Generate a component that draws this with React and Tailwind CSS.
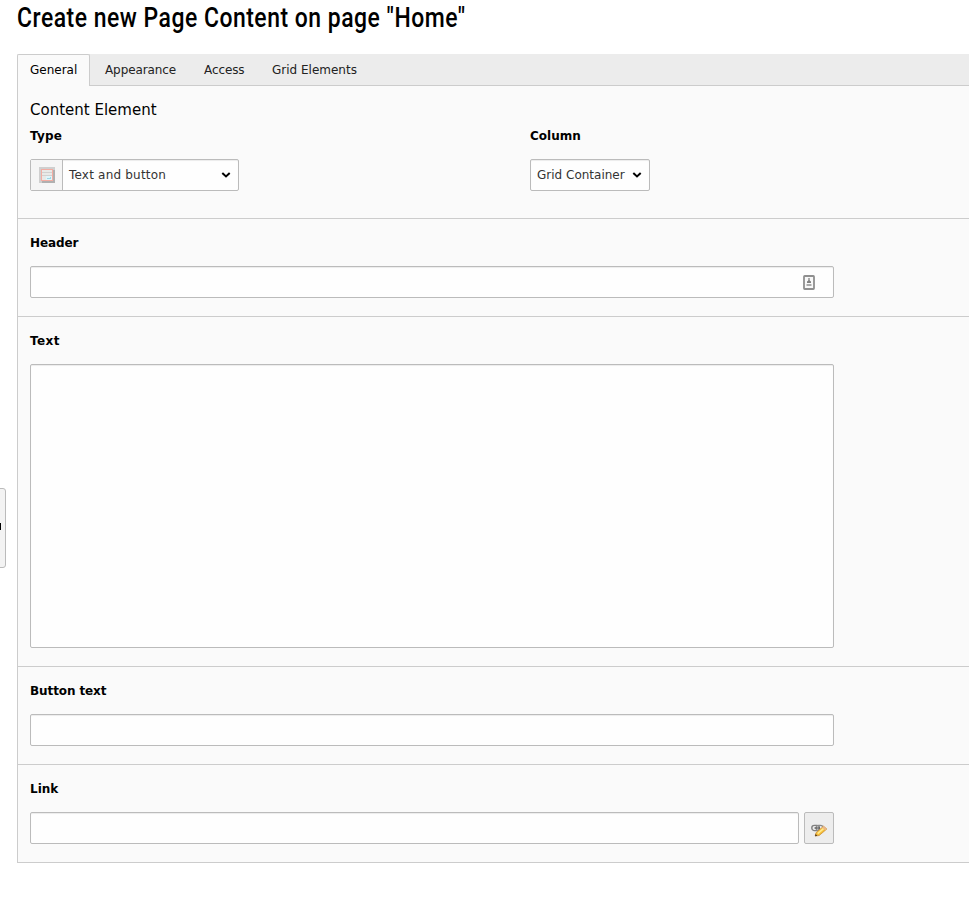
import React from "react";

const FIELD = "border border-[#bbb] rounded-[2px] bg-[#fefefe] shadow-[inset_0_1px_1px_rgba(0,0,0,0.075)]";

function Label({ children, spacing }) {
  return (
    <label className={`block h-5 pt-px text-[12px] leading-5 font-bold text-black whitespace-nowrap ${spacing || ""}`}>
      {children}
    </label>
  );
}

function Section({ label, spacing, children }) {
  return (
    <section className="border-b border-[#ccc] pl-3 pt-[13px] pb-[18px]">
      <Label spacing={spacing}>{label}</Label>
      <div className="mt-[14px] flex">{children}</div>
    </section>
  );
}

function Chevron() {
  return (
    <svg className="h-[6px] w-[10px] shrink-0" viewBox="0 0 10 6" fill="none">
      <path d="M1.3 1.1 5 4.5 8.7 1.1" stroke="#000" strokeWidth="2" />
    </svg>
  );
}

function ElementIcon() {
  return (
    <svg className="h-4 w-4 shrink-0" viewBox="0 0 16 16" shapeRendering="crispEdges">
      <rect width="16" height="16" fill="#cfcfcf" />
      <path d="M14 3h2v13H3v-2h11z" fill="#b0b0b0" />
      <rect x="2" y="2" width="12" height="12" fill="#f3aca2" />
      <rect x="3" y="3" width="10" height="10" fill="#e9e9e7" />
      <path d="M3 5h10v1H3zM3 8h10v1H3z" fill="#d2d0cf" />
      <rect x="7" y="9" width="6" height="4" fill="#e0f5fa" />
      <path d="M8 11h4v1H8zM11 10h1v1h-1z" fill="#9ed7e6" />
    </svg>
  );
}

function ContactIcon() {
  return (
    <svg className="h-[15px] w-3" viewBox="0 0 12 15">
      <rect x="1" y="1" width="10" height="13" rx=".7" fill="#f8f8f8" stroke="#8f8f8f" strokeWidth="1.8" />
      <path d="M6 3v3" stroke="#999" strokeWidth="1.6" />
      <path d="M4 8V6.5L6 5l2 1.5V8z" fill="#808080" />
      <path d="M3.5 10h5" stroke="#aaa" strokeWidth="2" />
    </svg>
  );
}

function LinkIcon() {
  return (
    <svg className="h-4 w-4 shrink-0" viewBox="0 0 16 16" fill="none">
      <rect x=".8" y="2.4" width="7.6" height="5.2" rx="2.6" stroke="#808080" strokeWidth="1.4" />
      <rect x="5" y="2.4" width="7" height="5.2" rx="2.6" stroke="#8c8c8c" strokeWidth="1.3" />
      <path d="M3.5 5h5.5" stroke="#555" strokeWidth="1.2" />
      <path d="m4.2 13 .8-3.3 7.5-6.5L15.8 6l-7.6 6.5z" fill="#f5bd36" stroke="#cc9038" strokeWidth=".8" />
      <path d="m6.7 10.6 6-5.3" stroke="#ffe98c" strokeWidth="1.7" />
      <path d="m12.5 3.1 3.3 2.8-1.5 1.4-3.2-2.8z" fill="#e9b58c" />
      <path d="m4 13.2.6-2.2 1.8 1.8z" fill="#4b3828" />
    </svg>
  );
}

export default function App() {
  return (
    <div className="relative h-[900px] w-[969px] overflow-hidden bg-white pl-[17px] font-['DejaVu_Sans',sans-serif] text-[12px] text-[#222]">
      <h1 className="h-[54px] w-max origin-left scale-x-[0.85] pt-0.5 font-['Roboto',sans-serif] text-[27px] leading-8 font-medium tracking-[0.59px] whitespace-nowrap text-black">
        Create new Page Content on page "Home"
      </h1>

      <nav className="flex h-8 border-b border-[#ccc] bg-[#ececec] leading-[30px] whitespace-nowrap">
        <div className="-mb-px h-8 w-[73px] rounded-t-[2px] border border-b-0 border-[#ccc] bg-[#fafafa] pl-3 text-black">General</div>
        <div className="ml-[15px] w-[99px] pt-px tracking-[-0.1px]">Appearance</div>
        <div className="w-[68px] pt-px tracking-[-0.1px]">Access</div>
        <div className="pt-px">Grid Elements</div>
      </nav>

      <main className="border-l border-[#ccc] bg-[#fafafa]">
        <section className="h-[133px] border-b border-[#ccc] pt-3 pl-3">
          <h2 className="h-[27px] pt-px text-[15px] leading-[23px] whitespace-nowrap text-black">Content Element</h2>
          <div className="flex">
            <div className="w-[500px]">
              <Label spacing="tracking-[0.2px]">Type</Label>
              <div className={`mt-[14px] flex h-8 w-[209px] ${FIELD}`}>
                <div className="flex w-8 items-center justify-center border-r border-[#bbb] bg-[#f5f5f5] pl-px">
                  <ElementIcon />
                </div>
                <div className="flex flex-1 items-center justify-between pr-[7px] pl-1.5 text-[#333]">
                  <span className="tracking-[0.2px]">Text and button</span>
                  <Chevron />
                </div>
              </div>
            </div>
            <div>
              <Label>Column</Label>
              <div className={`mt-[14px] flex h-8 w-[120px] items-center justify-between pr-[7px] pl-1.5 whitespace-nowrap text-[#333] ${FIELD}`}>
                <span>Grid Container</span>
                <Chevron />
              </div>
            </div>
          </div>
        </section>

        <Section label="Header" spacing="tracking-[-0.1px]">
          <div className={`flex h-8 w-[804px] items-center justify-end pr-[18px] ${FIELD}`}>
            <ContactIcon />
          </div>
        </Section>
        <Section label="Text" spacing="tracking-[0.4px]">
          <div className={`h-[284px] w-[804px] ${FIELD}`} />
        </Section>
        <Section label="Button text" spacing="tracking-[-0.1px]">
          <div className={`h-8 w-[804px] ${FIELD}`} />
        </Section>
        <Section label="Link">
          <div className={`h-8 w-[769px] ${FIELD}`} />
          <button className="ml-[5px] flex h-8 w-[30px] items-center justify-center rounded-[2px] border border-[#bbb] bg-[#ededed] pt-1.5">
            <LinkIcon />
          </button>
        </Section>
      </main>

      <div className="absolute top-[488px] -left-1 flex h-20 w-[10px] items-center rounded-r-[3px] border border-[#bbb] bg-[#f3f3f3]">
        <div className="mt-[-3px] ml-[2px] h-[7px] w-[2px] bg-black" />
      </div>
    </div>
  );
}
